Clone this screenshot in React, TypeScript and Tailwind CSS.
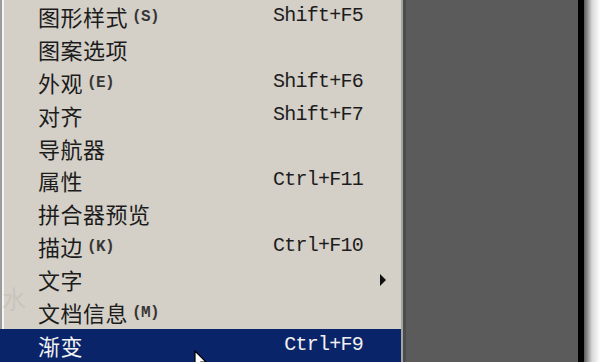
import { ReactNode } from 'react'

type Item = {
  label: string
  key?: string
  shortcut?: string
  submenu?: boolean
  active?: boolean
}

const items: Item[] = [
  { label: '图形样式', key: '(S)', shortcut: 'Shift+F5' },
  { label: '图案选项' },
  { label: '外观', key: '(E)', shortcut: 'Shift+F6' },
  { label: '对齐', shortcut: 'Shift+F7' },
  { label: '导航器' },
  { label: '属性', shortcut: 'Ctrl+F11' },
  { label: '拼合器预览' },
  { label: '描边', key: '(K)', shortcut: 'Ctrl+F10' },
  { label: '文字', submenu: true },
  { label: '文档信息', key: '(M)' },
  { label: '渐变', shortcut: 'Ctrl+F9', active: true },
]

const cjk = "font-['Noto_Sans_CJK_SC','Noto_Sans',sans-serif]"
const mono = "font-['Liberation_Mono','DejaVu_Sans_Mono',monospace]"

function Row({ item }: { item: Item }): ReactNode {
  const fg = item.active ? 'text-[#f2f2f2]' : 'text-[#1c1c1c]'
  return (
    <div
      className={`relative flex items-center h-[33.3px] pl-[38px] pr-[38px] ${
        item.active ? 'bg-[#0a246a]' : ''
      } ${fg}`}
    >
      <span className={`${cjk} text-[22px] leading-none tracking-[0.5px] -translate-y-[1px]`}>{item.label}</span>
      {item.key && (
        <span className={`${mono} ml-[4px] text-[16px] font-bold leading-none tracking-[-0.6px] opacity-85`}>
          {item.key}
        </span>
      )}
      <span className="flex-1" />
      {item.shortcut && (
        <span className={`${mono} text-[20px] leading-none tracking-[-0.75px] -translate-y-[1px]`}>{item.shortcut}</span>
      )}
      {item.submenu && (
        <svg className="absolute right-[14px] top-[10px]" width="7" height="12" viewBox="0 0 7 12">
          <path d="M0 0 L6 6 L0 12 Z" fill="#111" />
        </svg>
      )}
    </div>
  )
}

export default function App() {
  return (
    <div className="relative flex w-[600px] h-[362px] overflow-hidden bg-white">
      <div className="flex w-[401px] h-full bg-[#d4d0c8]">
        <div className="w-[2px] h-full bg-[#9c9c9c]" />
        <div className="w-[2px] h-full bg-[#f4f4f2]" />
        <div className="flex-1 flex flex-col pt-[1px] -ml-[4px]">
          {items.map((it) => (
            <Row key={it.label} item={it} />
          ))}
        </div>
      </div>
      <div className="w-[2px] h-full bg-[#a4a49e]" />
      <div className="w-[3px] h-full bg-[#4c4c4c]" />
      <div className="flex-1 h-full bg-[#5b5b5b]" />
      <div className="w-[6px] h-full bg-black" />
      <div className="w-[16px] h-full bg-gradient-to-r from-[#5a5a5a] via-[#d8d8d8] to-white" />

      <span className={`${cjk} absolute left-[2px] top-[286px] text-[24px] leading-none text-[#c2beb6] opacity-60`}>
        水
      </span>

      <svg className="absolute left-[194px] top-[350px]" width="14" height="22" viewBox="0 0 14 22">
        <path d="M1 1 L1 17 L5 13 L8 20 L10 19 L7 12 L12 12 Z" fill="white" stroke="black" strokeWidth="1.2" />
      </svg>
    </div>
  )
}
